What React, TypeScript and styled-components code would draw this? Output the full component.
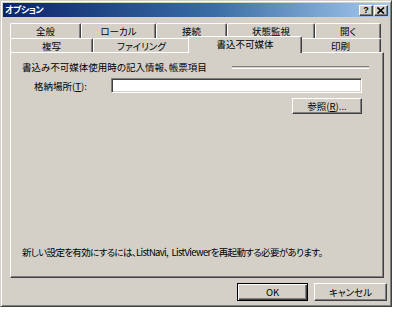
import React from "react";
import styled, { createGlobalStyle } from "styled-components";

const Global = createGlobalStyle`
  html, body { margin: 0; padding: 0; background: #ffffff; }
  body {
    font-family: "Noto Sans CJK JP", "Noto Sans", sans-serif;
    font-size: 9.5px;
    color: #000;
    font-feature-settings: "palt";
  }
`;

const Window = styled.div`
  width: 392px;
  height: 307px;
  box-sizing: border-box;
  background: #d4d0c8;
  border: 1px solid;
  border-color: #d4d0c8 #404040 #404040 #d4d0c8;
  box-shadow: inset 1px 1px #ffffff, inset -1px -1px #808080;
  padding: 2px;
  display: flex;
  flex-direction: column;
`;

const TitleBar = styled.div`
  height: 14px;
  flex: none;
  display: flex;
  align-items: center;
  padding: 0 1px 0 2px;
  background: linear-gradient(to right, #0a246a, #3a6ea5 55%, #a6caf0);
`;

const Title = styled.span`
  color: #fff;
  font-weight: bold;
  font-size: 9px;
  line-height: 14px;
  flex: 1;
  letter-spacing: -0.5px;
`;

const CaptionButton = styled.div<{ $gap?: number }>`
  width: 14px;
  height: 11px;
  box-sizing: border-box;
  margin-left: ${(p) => p.$gap ?? 0}px;
  background: #d4d0c8;
  border-top: 1px solid #fff;
  border-left: 1px solid #fff;
  border-right: 1px solid #404040;
  border-bottom: 1px solid #404040;
  box-shadow: inset -1px -1px #808080;
  display: flex;
  align-items: center;
  justify-content: center;
  font-family: "Liberation Sans", sans-serif;
  font-weight: bold;
  font-size: 9px;
  line-height: 9px;
  color: #000;
`;

const Content = styled.div`
  flex: 1;
  display: flex;
  flex-direction: column;
  padding: 6px 2px 3px 7px;
`;

const TabStrip = styled.div`
  display: flex;
  flex-direction: column;
  width: 371px;
`;

const TabRow = styled.div<{ $h: number }>`
  display: flex;
  height: ${(p) => p.$h}px;
`;

const Tab = styled.div<{ $w: number; $active?: boolean }>`
  width: ${(p) => p.$w}px;
  flex: none;
  box-sizing: border-box;
  background: #d4d0c8;
  border-top: 1px solid #fff;
  border-left: 1px solid #fff;
  border-right: 1px solid #404040;
  box-shadow: inset -1px 0 #808080;
  border-radius: 2px 2px 0 0;
  display: flex;
  align-items: center;
  justify-content: center;
  line-height: 12px;
  position: relative;
  ${(p) =>
    p.$active
      ? `
    margin: -2px -2px -1px -2px;
    height: calc(100% + 3px);
    z-index: 2;
    padding-bottom: 2px;
  `
      : `height: 100%;`}
`;

const Panel = styled.div`
  flex: 1;
  margin-right: 3px;
  box-sizing: border-box;
  border: 1px solid;
  border-color: #fff #404040 #404040 #fff;
  box-shadow: inset -1px -1px #808080;
  padding: 8px 14px 19px 11px;
  display: flex;
  flex-direction: column;
  position: relative;
  z-index: 1;
`;

const GroupHead = styled.div`
  display: flex;
  align-items: center;
  height: 12px;
  line-height: 12px;
`;

const Etched = styled.div`
  margin-left: auto;
  width: 137px;
  height: 1px;
  border-top: 1px solid #808080;
  border-bottom: 1px solid #fff;
`;

const FieldRow = styled.div`
  display: flex;
  align-items: center;
  margin-top: 5px;
  padding-left: 12px;
`;

const Label = styled.label`
  width: 77px;
  line-height: 12px;
`;

const TextBox = styled.div`
  width: 251px;
  height: 15px;
  box-sizing: border-box;
  background: #fff;
  border: 1px solid;
  border-color: #808080 #fff #fff #808080;
  box-shadow: inset 1px 1px #404040, inset -1px -1px #d4d0c8;
`;

const Button = styled.div<{ $w: number; $h: number; $default?: boolean }>`
  width: ${(p) => p.$w}px;
  height: ${(p) => p.$h}px;
  box-sizing: border-box;
  background: #d4d0c8;
  display: flex;
  align-items: center;
  justify-content: center;
  line-height: 12px;
  ${(p) =>
    p.$default
      ? `
    border: 1px solid #000;
    box-shadow: inset 1px 1px #fff, inset -1px -1px #404040, inset -2px -2px #808080;
  `
      : `
    border-top: 1px solid #fff;
    border-left: 1px solid #fff;
    border-right: 1px solid #404040;
    border-bottom: 1px solid #404040;
    box-shadow: inset -1px -1px #808080;
  `}
`;

const BrowseRow = styled.div`
  display: flex;
  justify-content: flex-end;
  margin-top: 5px;
  padding-right: 7px;
`;

const Note = styled.div`
  margin-top: auto;
  line-height: 12px;
  white-space: nowrap;
  letter-spacing: -0.65px;
  word-spacing: 2px;
`;

const ButtonRow = styled.div`
  display: flex;
  justify-content: flex-end;
  gap: 6px;
  margin-top: 5px;
`;

const row1 = [
  { t: "全般", w: 71 },
  { t: "ローカル", w: 75 },
  { t: "接続", w: 71 },
  { t: "状態監視", w: 88 },
  { t: "開く", w: 66 },
];

const row2 = [
  { t: "複写", w: 83 },
  { t: "ファイリング", w: 97 },
  { t: "書込不可媒体", w: 114, active: true },
  { t: "印刷", w: 81 },
];

export default function App() {
  return (
    <>
      <Global />
      <Window>
        <TitleBar>
          <Title>オプション</Title>
          <CaptionButton>?</CaptionButton>
          <CaptionButton $gap={1}>
            <svg width="8" height="7" viewBox="0 0 8 7">
              <path d="M0.5 0.5 L7 6.5 M7 0.5 L0.5 6.5" stroke="#000" strokeWidth="1.6" />
            </svg>
          </CaptionButton>
        </TitleBar>
        <Content>
          <TabStrip>
            <TabRow $h={15}>
              {row1.map((r) => (
                <Tab key={r.t} $w={r.w}>
                  {r.t}
                </Tab>
              ))}
            </TabRow>
            <TabRow $h={14}>
              {row2.map((r) => (
                <Tab key={r.t} $w={r.w} $active={r.active}>
                  {r.t}
                </Tab>
              ))}
            </TabRow>
          </TabStrip>
          <Panel>
            <GroupHead>
              <span>書込み不可媒体使用時の記入情報、帳票項目</span>
              <Etched />
            </GroupHead>
            <FieldRow>
              <Label>
                格納場所(<u>T</u>):
              </Label>
              <TextBox />
            </FieldRow>
            <BrowseRow>
              <Button $w={70} $h={16}>
                参照(<u>R</u>)...
              </Button>
            </BrowseRow>
            <Note>
              新しい設定を有効にするには、ListNavi, ListViewerを再起動する必要があります。
            </Note>
          </Panel>
          <ButtonRow>
            <Button $w={71} $h={18} $default>
              OK
            </Button>
            <Button $w={73} $h={18}>
              キャンセル
            </Button>
          </ButtonRow>
        </Content>
      </Window>
    </>
  );
}
